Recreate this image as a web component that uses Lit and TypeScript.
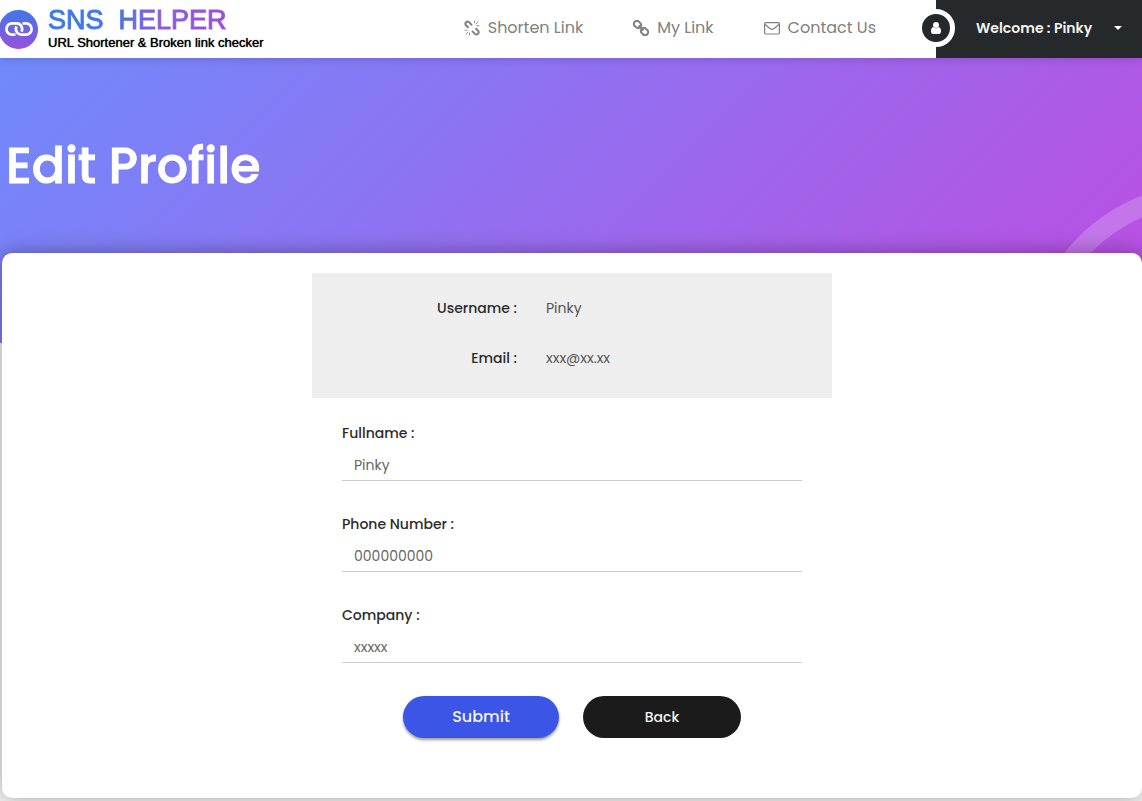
import { LitElement, html, css, svg } from "lit";
import { customElement, state } from "lit/decorators.js";

const brokenLinkIcon = svg`
  <svg viewBox="0 0 16 16" width="16" height="16" fill="none" stroke="currentColor" aria-hidden="true">
    <path stroke-width="2" d="M4.600 7.800 2.200 5.600C1.100 4.600 1.100 3.200 2 2.300 2.900 1.400 4.300 1.400 5.300 2.400L8 5.200M11.400 8.200 13.900 10.500C15 11.500 14.900 12.900 14 13.800 13.100 14.600 11.700 14.600 10.700 13.600L8 10.900"/>
    <path stroke-width=".8" d="M10.500 .5V3.500M15.500 5.700H12.500M14.200 1.800 11.700 4.300M5.500 15.500V12.500M.5 10.300H3.500M1.800 14.200 4.300 11.700"/>
  </svg>`;

const linkIcon = svg`
  <svg viewBox="0 0 16 16" width="16" height="16" fill="none" stroke="currentColor" aria-hidden="true">
    <g stroke-width="2" transform="rotate(45 8 8)">
      <rect x="-.8" y="5" width="7.600" height="6" rx="3"/>
      <rect x="9.200" y="5" width="7.600" height="6" rx="3"/>
      <path d="M4.500 8h7"/>
    </g>
  </svg>`;

const mailIcon = svg`
  <svg viewBox="0 0 16 16" width="16" height="16" fill="none" stroke="currentColor" stroke-width="1.200" aria-hidden="true">
    <rect x=".6" y="2.600" width="14.800" height="11.400" rx="1.200"/>
    <path d="M.8 4.200C3 6.200 4.800 7.500 6.400 8.800 7.600 9.700 8.400 9.700 9.600 8.800 11.200 7.500 13 6.200 15.200 4.200"/>
  </svg>`;

@customElement("app-root")
export class AppRoot extends LitElement {
  @state() private user = { name: "Pinky", email: "xxx@xx.xx" };

  private links = [
    { icon: brokenLinkIcon, text: "Shorten Link" },
    { icon: linkIcon, text: "My Link" },
    { icon: mailIcon, text: "Contact Us" },
  ];

  private fields = [
    { id: "fullname", label: "Fullname :", value: "Pinky", type: "text" },
    { id: "phone", label: "Phone Number :", value: "000000000", type: "tel" },
    { id: "company", label: "Company :", value: "xxxxx", type: "text" },
  ];

  static styles = css`
    :host {
      display: block;
      min-height: 100vh;
      background: #f4f4f4;
      color: #2b2b2b;
      font-family: Poppins, Inter, sans-serif;
      font-size: 14px;
      line-height: 22px;
    }
    *,
    *::before,
    *::after {
      box-sizing: border-box;
    }
    svg {
      display: block;
      flex: none;
    }
    .header {
      position: relative;
      z-index: 1;
      display: flex;
      height: 58px;
      background: #fff;
      box-shadow: 0 0 10px rgba(0, 0, 0, 0.2);
    }
    .brand {
      display: flex;
      align-items: center;
      gap: 10px;
      color: #000;
      text-decoration: none;
      font-family: "Liberation Sans", Arial, sans-serif;
      white-space: nowrap;
    }
    .brand-text {
      display: grid;
      padding-top: 4px;
    }
    .brand-name {
      justify-self: start;
      font-size: 27px;
      line-height: 24px;
      white-space: pre;
      background: linear-gradient(90deg, #3f78e8 35%, #8a5be0 62%, #9a4fdc);
      background-clip: text;
      -webkit-background-clip: text;
      color: transparent;
      -webkit-text-stroke: 1px transparent;
    }
    .brand-tag {
      font-size: 13px;
      line-height: 22px;
      text-shadow: 0 0 1px #000;
    }
    .nav {
      display: flex;
      align-items: center;
      gap: 50px;
      margin-left: auto;
      padding: 0 60px 2px 0;
    }
    .nav-link {
      display: flex;
      align-items: center;
      gap: 8px;
      color: #808080;
      font-size: 16px;
      text-decoration: none;
      white-space: nowrap;
    }
    .user {
      position: relative;
      display: flex;
      align-items: center;
      justify-content: space-between;
      width: 206px;
      padding: 0 20px 2px 40px;
      border: 0;
      background: #25292c;
      color: #f2f2f2;
      font: inherit;
      font-weight: 600;
      white-space: nowrap;
    }
    .avatar {
      position: absolute;
      left: -19px;
      top: 9px;
      display: grid;
      place-items: center;
      width: 38px;
      height: 38px;
      border: 5px solid #fff;
      border-radius: 50%;
      background: #25292c;
    }
    .hero {
      position: relative;
      height: 285px;
      padding: 72px 6px 0;
      overflow: hidden;
      background: linear-gradient(135deg, #708afb, #bd4de2);
    }
    .hero::after {
      content: "";
      position: absolute;
      top: 125px;
      right: -252px;
      width: 370px;
      height: 370px;
      border: 20px solid rgba(255, 255, 255, 0.2);
      border-radius: 50%;
    }
    .title {
      margin: 0;
      color: #fff;
      font-size: 49px;
      font-weight: 500;
      line-height: 72px;
      -webkit-text-stroke: 1px #fff;
    }
    .card {
      position: relative;
      margin: -90px 0 3px 2px;
      padding: 20px 20px 60px;
      border-radius: 10px;
      background: #fff;
      box-shadow: 0 0 20px rgba(0, 0, 0, 0.35);
    }
    .form {
      max-width: 520px;
      margin: 0 auto;
    }
    .account {
      margin: 0 0 24px;
      padding: 10px 0 15px;
      background: #eee;
    }
    .row {
      display: grid;
      grid-template-columns: 205px 1fr;
      gap: 29px;
      align-items: center;
      height: 50px;
    }
    .row dt {
      text-align: right;
      font-weight: 500;
    }
    .row dd {
      margin: 0;
      color: #555;
    }
    .fields {
      display: grid;
      gap: 32px;
      padding: 0 30px;
    }
    .field {
      display: grid;
      gap: 6px;
    }
    .field label {
      font-weight: 500;
    }
    .field input {
      width: 100%;
      height: 31px;
      padding: 0 12px;
      border: 0;
      border-bottom: 1px solid #ccc;
      border-radius: 0;
      outline: 0;
      background: transparent;
      color: #666;
      font: inherit;
    }
    .actions {
      display: flex;
      justify-content: center;
      gap: 24px;
      margin-top: 33px;
    }
    .btn {
      width: 158px;
      height: 42px;
      border: 0;
      border-radius: 21px;
      background: #1b1b1b;
      color: #f2f2f2;
      font: inherit;
      font-weight: 500;
    }
    .btn.primary {
      width: 156px;
      background: #3b55e6;
      font-size: 16px;
      box-shadow: 0 2px 3px rgba(0, 0, 0, 0.4);
    }
  `;

  render() {
    return html`
      <header class="header">
        <a class="brand" href="#">
          <svg viewBox="0 0 38 39" width="38" height="39" aria-hidden="true">
            <defs>
              <linearGradient id="disc" x2="0" y2="1">
                <stop offset="0" stop-color="#3f78e8" />
                <stop offset="1" stop-color="#9a4fdc" />
              </linearGradient>
            </defs>
            <circle cx="18.500" cy="19.500" r="19.500" fill="url(#disc)" />
            <g fill="none" stroke="#fff" stroke-width="2.700">
              <path d="M15.500 24.600H12a5.600 5.600 0 0 1 0-11.200H16.500a5.600 5.600 0 0 1 5 8.200" />
              <path d="M22.500 13.400H26a5.600 5.600 0 0 1 0 11.200H21.500a5.600 5.600 0 0 1-5-8.200" />
            </g>
          </svg>
          <span class="brand-text">
            <span class="brand-name">SNS  HELPER</span>
            <span class="brand-tag">URL Shortener &amp; Broken link checker</span>
          </span>
        </a>
        <nav class="nav">
          ${this.links.map((l) => html`<a class="nav-link" href="#">${l.icon}<span>${l.text}</span></a>`)}
        </nav>
        <button class="user" type="button" aria-haspopup="menu">
          <span class="avatar">
            <svg viewBox="0 0 10 12" width="10" height="12" fill="#fff" aria-hidden="true">
              <circle cx="5" cy="3" r="3" />
              <path d="M2.200 5C3.800 6.700 6.200 6.700 7.800 5 9.400 5.300 10 7 10 9.500 10 11 9.200 12 8 12H2C.8 12 0 11 0 9.500 0 7 .6 5.300 2.200 5Z" />
            </svg>
          </span>
          <span>Welcome : ${this.user.name}</span>
          <svg viewBox="0 0 8 4" width="8" height="4" fill="#fff" aria-hidden="true"><path d="M0 0H8L4 4Z" /></svg>
        </button>
      </header>
      <section class="hero"><h1 class="title">Edit Profile</h1></section>
      <main class="card">
        <form class="form" @submit=${(e: Event) => e.preventDefault()}>
          <dl class="account">
            <div class="row"><dt>Username :</dt><dd>${this.user.name}</dd></div>
            <div class="row"><dt>Email :</dt><dd>${this.user.email}</dd></div>
          </dl>
          <div class="fields">
            ${this.fields.map(
              (f) => html`<div class="field">
                <label for=${f.id}>${f.label}</label>
                <input id=${f.id} type=${f.type} .value=${f.value} />
              </div>`
            )}
          </div>
          <div class="actions">
            <button class="btn primary" type="submit">Submit</button>
            <button class="btn" type="button">Back</button>
          </div>
        </form>
      </main>
    `;
  }
}
